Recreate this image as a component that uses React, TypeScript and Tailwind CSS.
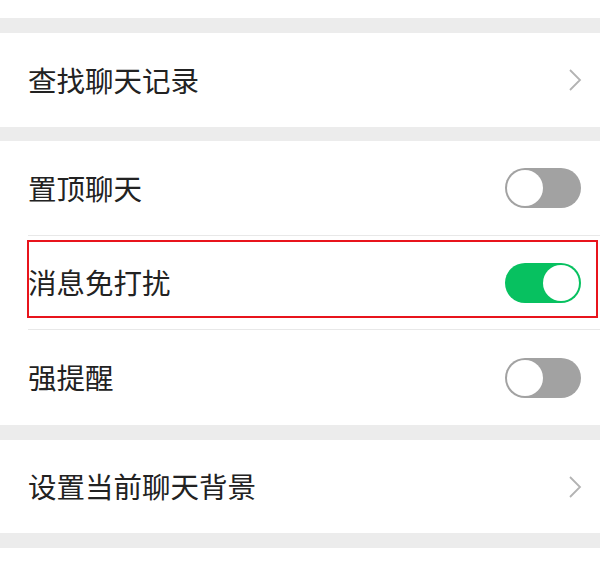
import React from "react";

const font = { fontFamily: '"Noto Sans CJK SC", "Noto Sans", sans-serif' };

function Chevron() {
  return (
    <svg width="14" height="24" viewBox="0 0 14 24" className="mr-[18px]">
      <polyline points="2,2 12,12 2,22" fill="none" stroke="#b3b3b3" strokeWidth="1.8" />
    </svg>
  );
}

function Toggle({ on }: { on: boolean }) {
  return (
    <div
      className={`mr-[19px] flex h-[40px] w-[76px] items-center rounded-full p-[2px] ${
        on ? "justify-end bg-[#07c160]" : "justify-start bg-[#a2a2a2]"
      }`}
    >
      <div className="h-[36px] w-[36px] rounded-full bg-white" />
    </div>
  );
}

function Row({ label, right, height = "h-[94px]" }: { label: string; right: React.ReactNode; height?: string }) {
  return (
    <div className={`flex ${height} items-center justify-between bg-white pl-[28px]`}>
      <span className="text-[28.5px] leading-none text-[#222]">{label}</span>
      {right}
    </div>
  );
}

function Divider() {
  return (
    <div className="bg-white pl-[28px]">
      <div className="h-px bg-[#e8e8e8]" />
    </div>
  );
}

export default function App() {
  return (
    <div className="h-[563px] w-[600px] overflow-hidden bg-white" style={font}>
      <div className="h-[18px] bg-white" />
      <div className="h-[15px] bg-[#ececec]" />
      <Row label="查找聊天记录" right={<Chevron />} />
      <div className="h-[14px] bg-[#ececec]" />
      <Row label="置顶聊天" right={<Toggle on={false} />} />
      <Divider />
      <div className="relative">
        <Row label="消息免打扰" right={<Toggle on={true} />} height="h-[93px]" />
        <div className="absolute left-[27px] top-[4px] h-[78px] w-[571px] border-2 border-[#e8141c]" />
      </div>
      <Divider />
      <Row label="强提醒" right={<Toggle on={false} />} height="h-[95px]" />
      <div className="h-[15px] bg-[#ececec]" />
      <Row label="设置当前聊天背景" right={<Chevron />} height="h-[93px]" />
      <div className="h-[15px] bg-[#ececec]" />
      <div className="h-[15px] bg-white" />
    </div>
  );
}
